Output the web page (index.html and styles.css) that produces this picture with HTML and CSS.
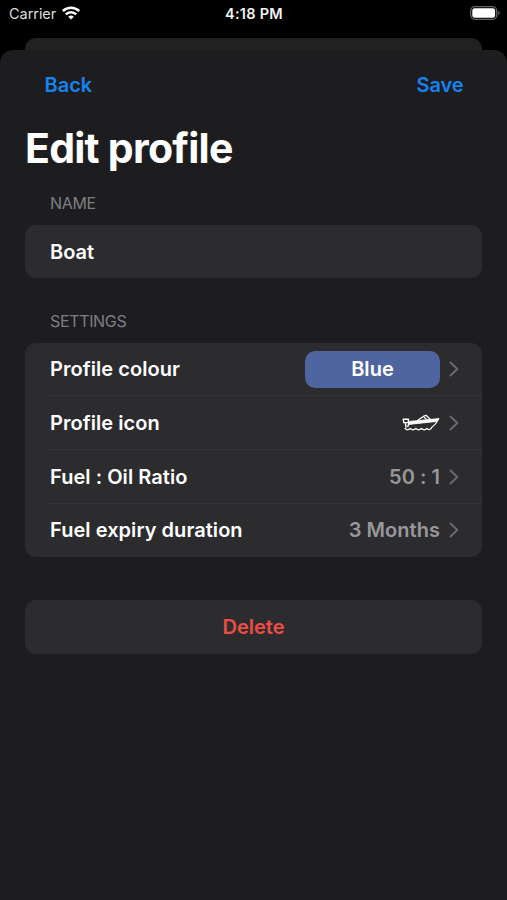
FILE: index.html
```html
<!DOCTYPE html>
<html lang="en">
<head>
<meta charset="utf-8">
<title>Edit profile</title>
<link rel="stylesheet" href="styles.css">
</head>
<body>
<svg class="defs" width="0" height="0" aria-hidden="true">
  <symbol id="chevron" viewBox="0 0 10 16"><path d="M1.5 1.5 8.3 8 1.5 14.5" fill="none" stroke="currentColor" stroke-width="2" stroke-linecap="round" stroke-linejoin="round"/></symbol>
</svg>
<header class="status">
  <div class="carrier"><span>Carrier</span>
    <svg width="18" height="14" viewBox="0 0 18 14" fill="none" stroke="#fff" stroke-width="2.6"><path d="M.8 5.1a11.8 11.8 0 0 1 16.4 0M3.8 8.4a7.4 7.4 0 0 1 10.4 0"/><path d="M9 13.6 6.1 10.8a4.2 4.2 0 0 1 5.8 0Z" fill="#fff" stroke="none"/></svg>
  </div>
  <div class="time">4:18 PM</div>
  <svg class="battery" width="30" height="14" viewBox="0 0 30 14"><rect x=".7" y=".7" width="26" height="12.6" rx="4" fill="none" stroke="#666" stroke-width="1.3"/><rect x="2.3" y="2.3" width="22.8" height="9.4" rx="2.3" fill="#fff"/><path d="M28.2 4.7q1.5.7 1.5 2.3t-1.5 2.3Z" fill="#666"/></svg>
</header>
<div class="backdrop-sheet"></div>
<main class="sheet">
  <nav class="nav"><span class="back">Back</span><span class="save">Save</span></nav>
  <h1>Edit profile</h1>
  <h2 class="name-title">NAME</h2>
  <section class="card name-card"><span class="boat-name">Boat</span></section>
  <h2 class="settings-title">SETTINGS</h2>
  <section class="card settings-card">
    <div class="row"><span class="label">Profile colour</span><span class="pill">Blue</span><svg class="chevron"><use href="#chevron"/></svg></div>
    <div class="row"><span class="label">Profile icon</span>
      <svg class="boat" width="38" height="18" viewBox="0 0 38 18" fill="none" stroke="#fff" stroke-linecap="round" stroke-linejoin="round"><path d="M7 7.4 37 4.6 35 7.4 7 10.4Z" fill="#fff" stroke-width=".8"/><path d="M36.5 4.9Q34 10.5 29.5 13.5M15.5 6.4 21.3 2.4 24 1.2 28 5M21.3 2.4l3 2.8" stroke-width="1.2"/><path d="M1.2 5.2h5.2v3.4H1.8ZM3.4 8.6l.5 4.6M6.8 9.4l-1 3.2" stroke-width="1.4"/><path d="M3 14.5q2.6 2.6 5.2 0 2.8 2.6 5.6 0 2.8 2.6 5.6 0 2.8 2.6 5.6 0 2.6 2.4 4.6-.6" stroke-width="1.2"/></svg>
      <svg class="chevron"><use href="#chevron"/></svg></div>
    <div class="row"><span class="label">Fuel : Oil Ratio</span><span class="value">50 : 1</span><svg class="chevron"><use href="#chevron"/></svg></div>
    <div class="row"><span class="label">Fuel expiry duration</span><span class="value">3 Months</span><svg class="chevron"><use href="#chevron"/></svg></div>
  </section>
  <section class="card delete-card"><span class="delete">Delete</span></section>
</main>
</body>
</html>
```

FILE: styles.css
```css
* { box-sizing: border-box; }
body { margin: 0; height: 900px; background: #000; color: #fff; font: 560 20px/24px Inter, "Liberation Sans", sans-serif; display: flex; flex-direction: column; overflow: hidden; }
.defs { position: absolute; }
.status { height: 38px; padding: 0 7px 0 9px; display: grid; grid-template-columns: 1fr auto 1fr; align-items: start; font-size: 14.5px; line-height: 28px; }
.carrier { display: flex; gap: 6px; font-weight: 400; color: #ddd; letter-spacing: -.05px; }
.carrier svg { margin-top: 6px; }
.time { font-weight: 600; color: #f2f2f2; letter-spacing: .25px; margin-right: -1px; transform: translateX(-1px); }
.battery { justify-self: end; margin-top: 6px; }
.backdrop-sheet { height: 12px; margin: 0 25px; border-radius: 11px 11px 0 0; background: #212122; flex: none; }
.sheet { flex: 1; background: #1d1d1f; border-radius: 13px 13px 0 0; padding: 0 25px; }
.nav { display: flex; justify-content: space-between; padding: 23px 18.5px 0 19.5px; color: #1683f0; }
.save { font-weight: 600; letter-spacing: -.1px; }
h1 { font-size: 41px; line-height: 50px; font-weight: 700; letter-spacing: -.75px; margin: 26px 0 0; }
h2 { font-size: 16px; line-height: 20px; font-weight: 400; letter-spacing: -.35px; color: #7e7e82; margin: 20px 0 11.5px 25px; }
.settings-title { margin: 33px 0 11.5px 25px; }
.card { background: #2c2c2e; border-radius: 11px; overflow: hidden; }
.name-card { height: 53.5px; padding: 15px 25px; }
.settings-card { margin-top: 0; }
.row { height: 53.7px; display: flex; align-items: center; padding: 0 23px 0 25px; letter-spacing: .05px; background: linear-gradient(#343436, #343436) 23px 100% / 100% 1px no-repeat; }
.row:last-child { background: none; }
.label { flex: 1; }
.value { color: #98989c; }
.pill { width: 135px; height: 37px; border-radius: 10px; background: #4f659f; text-align: center; line-height: 37px; }
.chevron { width: 10px; height: 16px; margin-left: 9px; color: #69696c; }
.delete-card { margin-top: 42.5px; height: 54px; display: grid; place-items: center; color: #ed4c44; }
```
